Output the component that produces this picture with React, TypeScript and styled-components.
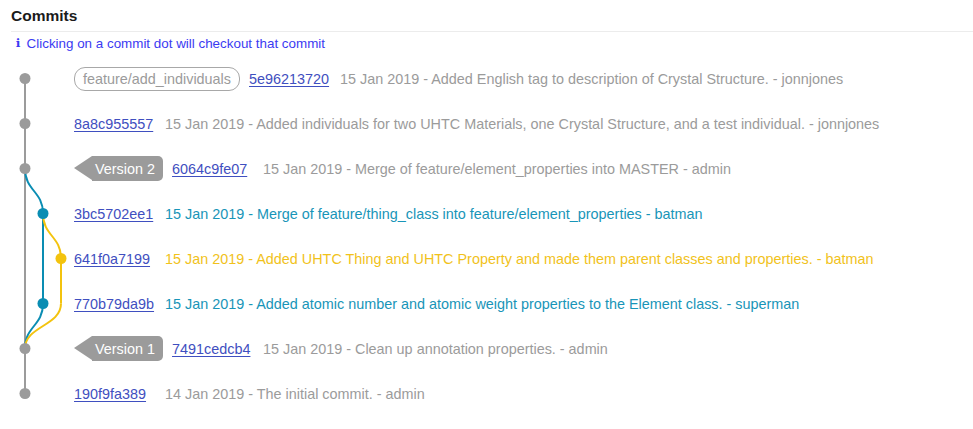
import React from 'react';
import styled, { createGlobalStyle } from 'styled-components';

const GlobalStyle = createGlobalStyle`
  html, body {
    margin: 0;
    padding: 0;
    background: #fff;
  }
  body {
    font-family: "Liberation Sans", Arial, sans-serif;
  }
`;

type Tone = 'gray' | 'blue' | 'yellow';

const tones: Record<Tone, string> = {
  gray: '#9b9b9b',
  blue: '#1895b8',
  yellow: '#f1c21b',
};

const lineColors: Record<Tone, string> = {
  gray: '#9b9b9b',
  blue: '#0a8db3',
  yellow: '#f3c30e',
};

const ROW = 45;
const LANE_X = [25, 43, 61];

type Commit = {
  hash: string;
  message: string;
  lane: number;
  tone: Tone;
  branch?: string;
  version?: string;
};

const commits: Commit[] = [
  {
    hash: '5e96213720',
    message: '15 Jan 2019 - Added English tag to description of Crystal Structure. - jonnjones',
    lane: 0,
    tone: 'gray',
    branch: 'feature/add_individuals',
  },
  {
    hash: '8a8c955557',
    message: '15 Jan 2019 - Added individuals for two UHTC Materials, one Crystal Structure, and a test individual. - jonnjones',
    lane: 0,
    tone: 'gray',
  },
  {
    hash: '6064c9fe07',
    message: '15 Jan 2019 - Merge of feature/element_properties into MASTER - admin',
    lane: 0,
    tone: 'gray',
    version: 'Version 2',
  },
  {
    hash: '3bc5702ee1',
    message: '15 Jan 2019 - Merge of feature/thing_class into feature/element_properties - batman',
    lane: 1,
    tone: 'blue',
  },
  {
    hash: '641f0a7199',
    message: '15 Jan 2019 - Added UHTC Thing and UHTC Property and made them parent classes and properties. - batman',
    lane: 2,
    tone: 'yellow',
  },
  {
    hash: '770b79da9b',
    message: '15 Jan 2019 - Added atomic number and atomic weight properties to the Element class. - superman',
    lane: 1,
    tone: 'blue',
  },
  {
    hash: '7491cedcb4',
    message: '15 Jan 2019 - Clean up annotation properties. - admin',
    lane: 0,
    tone: 'gray',
    version: 'Version 1',
  },
  {
    hash: '190f9fa389',
    message: '14 Jan 2019 - The initial commit. - admin',
    lane: 0,
    tone: 'gray',
  },
];

const Page = styled.div`
  width: 973px;
  color: #222;
`;

const Header = styled.div`
  margin-left: 11px;
  height: 31px;
  border-bottom: 1px solid #ececec;
  display: flex;
  align-items: center;
  font-size: 15.5px;
  font-weight: bold;
  color: #1b1b1b;
`;

const Info = styled.div`
  display: flex;
  align-items: center;
  gap: 6px;
  height: 20px;
  margin-top: 1px;
  padding-left: 16px;
  font-size: 13.4px;
  color: #3b3bf2;
`;

const InfoIcon = styled.span`
  font-weight: bold;
  font-family: "DejaVu Sans", sans-serif;
  font-size: 12px;
`;

const Log = styled.div`
  display: flex;
  margin-top: 3px;
`;

const Graph = styled.svg`
  flex: none;
  width: 74px;
`;

const Rows = styled.div`
  display: flex;
  flex-direction: column;
`;

const Row = styled.div`
  height: ${ROW}px;
  display: flex;
  align-items: center;
  gap: 9px;
  white-space: nowrap;
  font-size: 14.4px;
`;

const BranchTag = styled.span`
  height: 22px;
  padding: 0 8px;
  border: 1px solid #a8a8a8;
  border-radius: 11px;
  display: flex;
  align-items: center;
  color: #9b9b9b;
`;

const VersionTag = styled.span`
  position: relative;
  height: 25px;
  margin-left: 18px;
  padding: 0 8px 0 3px;
  background: #9b9b9b;
  border-radius: 0 5px 5px 0;
  display: flex;
  align-items: center;
  color: #fff;

  &::before {
    content: '';
    position: absolute;
    left: -18px;
    top: 0;
    border-style: solid;
    border-width: 12.5px 18px 12.5px 0;
    border-color: transparent #9b9b9b transparent transparent;
  }
`;

const HashCell = styled.span`
  width: 82px;
  flex: none;
`;

const Hash = styled.a`
  color: #3f4fc0;
  text-decoration: underline;
  text-underline-offset: 2px;
`;

const Message = styled.span<{ $tone: Tone }>`
  color: ${({ $tone }) => tones[$tone]};
`;

const cy = (i: number) => ROW / 2 + i * ROW;

function curve(x1: number, y1: number, x2: number, y2: number) {
  const my = (y1 + y2) / 2;
  return `M${x1} ${y1} C${x1} ${my} ${x2} ${my} ${x2} ${y2}`;
}

const CommitGraph: React.FC = () => {
  const [m, b, y] = LANE_X;
  const h = commits.length * ROW;
  return (
    <Graph height={h} viewBox={`0 0 74 ${h}`}>
      <g fill="none" strokeWidth={2}>
        <line x1={m} y1={cy(0)} x2={m} y2={cy(7)} stroke={lineColors.gray} />
        <path d={curve(m, cy(2), b, cy(3))} stroke={lineColors.blue} />
        <line x1={b} y1={cy(3)} x2={b} y2={cy(5)} stroke={lineColors.blue} />
        <path d={curve(b, cy(5), m, cy(6))} stroke={lineColors.blue} />
        <path d={curve(b, cy(3), y, cy(4))} stroke={lineColors.yellow} />
        <line x1={y} y1={cy(4)} x2={y} y2={cy(5)} stroke={lineColors.yellow} />
        <path d={curve(y, cy(5), m, cy(6))} stroke={lineColors.yellow} />
      </g>
      {commits.map((c, i) => (
        <circle key={c.hash} cx={LANE_X[c.lane]} cy={cy(i)} r={5.5} fill={lineColors[c.tone]} />
      ))}
    </Graph>
  );
};

export default function App() {
  return (
    <Page>
      <GlobalStyle />
      <Header>Commits</Header>
      <Info>
        <InfoIcon>ℹ</InfoIcon>
        Clicking on a commit dot will checkout that commit
      </Info>
      <Log>
        <CommitGraph />
        <Rows>
          {commits.map((c) => (
            <Row key={c.hash}>
              {c.branch && <BranchTag>{c.branch}</BranchTag>}
              {c.version && <VersionTag>{c.version}</VersionTag>}
              <HashCell>
                <Hash href="#">{c.hash}</Hash>
              </HashCell>
              <Message $tone={c.tone}>{c.message}</Message>
            </Row>
          ))}
        </Rows>
      </Log>
    </Page>
  );
}
